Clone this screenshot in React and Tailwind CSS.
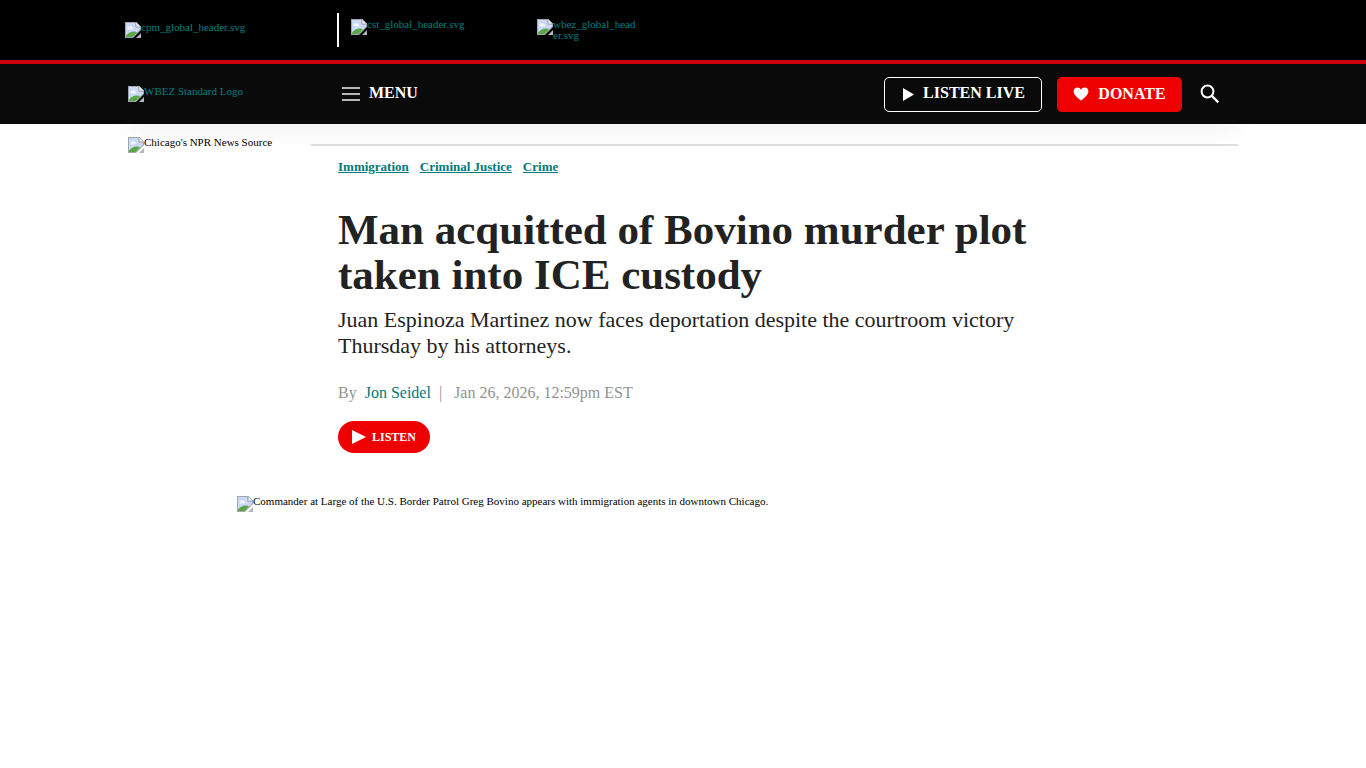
import React from "react";

const TOPICS = ["Immigration", "Criminal Justice", "Crime"];

// Placeholder glyph shown next to alt text
function BrokenImage() {
  return (
    <svg className="w-4 h-4 shrink-0" viewBox="0 0 16 16" aria-hidden="true">
      <path d="M0 0H11L16 5V8L8 16H0Z" fill="#a4a6aa" />
      <path d="M1 1H10.500V5.500H15V7.600L7.600 15H1Z" fill="#c9d9f7" />
      <path d="M2.500 6.500a1.500 1.500 0 0 1 1.500-2 1.800 1.800 0 0 1 3 .5A1.300 1.300 0 0 1 7.500 7.500H3Z" fill="#eef3fd" />
      <path d="M1 15V13.500C3 11 6 9 10 9.500L12 10.600L7.600 15Z" fill="#5aa845" />
      <path d="M11 0L16 5H11Z" fill="#eceef2" stroke="#a4a6aa" strokeWidth="0.800" />
      <path d="M16 11V16H11Z" fill="#b4b8bd" />
    </svg>
  );
}

function AltImage({ alt, className = "" }) {
  return (
    <span className={`flex items-start text-[11px] leading-[11px] ${className}`}>
      <BrokenImage />
      <span className="min-w-0 break-all">{alt}</span>
    </span>
  );
}

function GlobalBar() {
  return (
    <div className="bg-black border-b-4 border-[#cc000b]">
      <div className="max-w-[1116px] h-[60px] mx-auto flex items-center text-[#008080]">
        <a href="#" className="w-[212px]"><AltImage alt="cpm_global_header.svg" /></a>
        <div className="w-0.5 h-[34px] bg-white mr-3" />
        <a href="#" className="w-[186px] h-[22px]"><AltImage alt="cst_global_header.svg" /></a>
        <a href="#" className="w-[101px] h-[22px]"><AltImage alt="wbez_global_header.svg" /></a>
      </div>
    </div>
  );
}

function NavBar() {
  return (
    <header className="bg-[#0a0a0a]">
      <div className="max-w-[1110px] h-[60px] mx-auto flex items-center shadow-[0_10px_20px_rgba(0,0,0,0.04)]">
        <a href="#" className="w-[214px] text-[#008080]"><AltImage alt="WBEZ Standard Logo" /></a>
        <button className="flex items-center gap-[9px] pb-0.5 text-white font-bold text-base leading-5">
          <span className="flex flex-col gap-1 w-[18px] pt-0.5">
            <span className="h-0.5 bg-[#b8b8b8]" />
            <span className="h-0.5 bg-[#b8b8b8]" />
            <span className="h-0.5 bg-[#b8b8b8]" />
          </span>
          MENU
        </button>
        <div className="ml-auto flex items-center text-white font-bold text-base leading-5">
          <button className="h-[35px] w-[158px] flex items-center justify-center gap-[9px] pl-0.5 pb-0.5 border border-white rounded-[5px]">
            <svg className="w-[11px] h-[13px] mt-0.5" viewBox="0 0 11 13" fill="currentColor"><path d="M0 0L11 6.500L0 13Z" /></svg>
            LISTEN LIVE
          </button>
          <button className="h-[35px] w-[125px] ml-[15px] flex items-center justify-center gap-[9px] bg-[#ee0000] rounded-[5px]">
            <svg className="w-4 h-[14px]" viewBox="0 0 16 14" fill="currentColor"><path d="M8 13.600C6 11.800 0.600 8 0.600 4.400C0.600 2.100 2.200 0.600 4.300 0.600C5.900 0.600 7.200 1.400 8 2.700C8.800 1.400 10.100 0.600 11.700 0.600C13.800 0.600 15.400 2.100 15.400 4.400C15.400 8 10 11.800 8 13.600Z" /></svg>
            DONATE
          </button>
          <button aria-label="Search" className="mx-[18px]">
            <svg className="w-5 h-5" viewBox="0 0 20 20" fill="none" stroke="currentColor" strokeWidth="2">
              <circle cx="7.500" cy="7.500" r="5.900" />
              <path d="M11.800 11.800L18.300 18.300" strokeWidth="2.400" />
            </svg>
          </button>
        </div>
      </div>
    </header>
  );
}

export default function App() {
  return (
    <div className="bg-white text-[#222222] font-['Liberation_Serif',serif]">
      <GlobalBar />
      <NavBar />

      <main>
        <div className="max-w-[1110px] mx-auto flex">
          <aside className="w-[183px] shrink-0 pt-[13px] text-black">
            <AltImage alt="Chicago's NPR News Source" />
          </aside>

          <article className="flex-1 mt-5 border-t-2 border-[#dddddd] pl-[27px]">
            <nav className="mt-3 flex gap-[11px] text-[13px] leading-[18px] font-bold text-[#007a7a]">
              {TOPICS.map(t => <a key={t} href="#" className="underline">{t}</a>)}
            </nav>

            <div className="max-w-[700px]">
              <h1 className="mt-[31px] text-[43px] leading-[45px] font-bold">Man acquitted of Bovino murder plot taken into ICE custody</h1>
              <p className="mt-2.5 text-[22px] leading-[26px]">Juan Espinoza Martinez now faces deportation despite the courtroom victory Thursday by his attorneys.</p>
            </div>

            {/* Byline */}
            <div className="mt-6 flex text-base leading-5 text-[#929292]">
              <span>By</span>
              <a href="#" className="ml-2 text-[#007a7a]">Jon Seidel</a>
              <span className="ml-2">|</span>
              <time className="ml-3">Jan 26, 2026, 12:59pm EST</time>
            </div>

            <button className="mt-[18px] h-8 w-[92px] rounded-full bg-[#ee0000] text-white flex items-center justify-center gap-1.5 text-xs font-bold">
              <svg className="w-[14px] h-[14px]" viewBox="0 0 14 14" fill="currentColor"><path d="M0 0L14 7L0 14Z" /></svg>
              LISTEN
            </button>
          </article>
        </div>

        <figure className="max-w-[892px] mx-auto mt-[43px] text-black">
          <AltImage alt="Commander at Large of the U.S. Border Patrol Greg Bovino appears with immigration agents in downtown Chicago." />
        </figure>
      </main>
    </div>
  );
}
